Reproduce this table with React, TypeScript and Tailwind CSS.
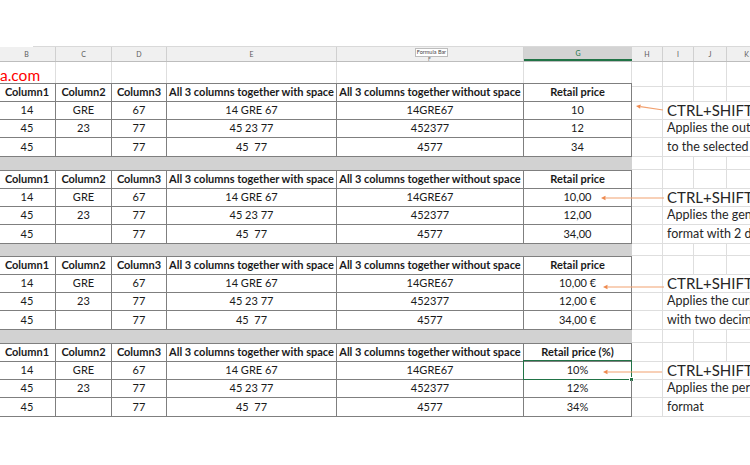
import React from "react";

const GRID =
  "grid grid-cols-[58px_56px_55px_170px_187px_108px_31px_31px_33px_40px] ml-[-2px]";

const LIGHT = "border-[#dedede]";
const DARK = "border-[#7f7f7f]";

type Block = {
  gHeader: string;
  g: string[];
  notes: string[];
};

const base: string[][] = [
  ["14", "GRE", "67", "14 GRE 67", "14GRE67"],
  ["45", "23", "77", "45 23 77", "452377"],
  ["45", "", "77", "45  77", "4577"],
];

const headers = [
  "Column1",
  "Column2",
  "Column3",
  "All 3 columns together with space",
  "All 3 columns together without space",
];

const blocks: Block[] = [
  {
    gHeader: "Retail price",
    g: ["10", "12", "34"],
    notes: ["CTRL+SHIFT+&", "Applies the outline border", "to the selected cells"],
  },
  {
    gHeader: "Retail price",
    g: ["10,00", "12,00", "34,00"],
    notes: ["CTRL+SHIFT+!", "Applies the general number", "format with 2 decimals"],
  },
  {
    gHeader: "Retail price",
    g: ["10,00 €", "12,00 €", "34,00 €"],
    notes: ["CTRL+SHIFT+$", "Applies the currency format", "with two decimals"],
  },
  {
    gHeader: "Retail price (%)",
    g: ["10%", "12%", "34%"],
    notes: ["CTRL+SHIFT+%", "Applies the percentage", "format"],
  },
];

const rowHeights = ["h-[18px]", "h-[19px]", "h-[18px]", "h-[19px]"];
const grayHeights = ["h-[13px]", "h-[12px]", "h-[13px]"];

function RightCells({ note, big }: { note?: string; big?: boolean }) {
  return (
    <>
      <div className={`border-r border-b ${LIGHT}`} />
      {note !== undefined ? (
        <div
          className={`col-span-3 border-b ${LIGHT} flex items-center pl-[4px] whitespace-nowrap overflow-hidden text-[#262626] ${
            big ? "text-[15px] pt-[1px]" : "text-[12.5px]"
          }`}
        >
          {note}
        </div>
      ) : (
        <>
          <div className={`border-r border-b ${LIGHT}`} />
          <div className={`border-r border-b ${LIGHT}`} />
          <div className={`border-b ${LIGHT}`} />
        </>
      )}
    </>
  );
}

function TableBlock({ block, idx }: { block: Block; idx: number }) {
  const rows: { cells: string[]; header: boolean }[] = [
    { cells: [...headers, block.gHeader], header: true },
    ...base.map((r, i) => ({ cells: [...r, block.g[i]], header: false })),
  ];
  return (
    <>
      {rows.map((row, ri) => (
        <div key={ri} className={`${GRID} ${rowHeights[ri]}`}>
          {row.cells.map((c, ci) => {
            const selected = idx === 3 && ri === 1 && ci === 5;
            return (
              <div
                key={ci}
                className={`relative flex items-center justify-center whitespace-pre text-[11px] text-[#1a1a1a] border-r border-b ${DARK} ${
                  ci === 0 ? "border-l" : ""
                } ${ri === 0 ? "border-t font-bold" : ""}`}
              >
                {c}
                {selected && (
                  <>
                    <div className="absolute inset-[-1px] border-[1.5px] border-[#217346]" />
                    <div className="absolute right-[-3px] bottom-[-3px] w-[5px] h-[5px] bg-[#217346] border border-white" />
                  </>
                )}
              </div>
            );
          })}
          <RightCells
            note={ri === 0 ? undefined : block.notes[ri - 1]}
            big={ri === 1}
          />
        </div>
      ))}
      {idx < 3 && (
        <div className={`${GRID} ${grayHeights[idx]}`}>
          <div className="col-span-6 bg-[#d2d2d2]" />
          <RightCells />
        </div>
      )}
    </>
  );
}

const letters = ["B", "C", "D", "E", "F", "G", "H", "I", "J", "K"];

export default function App() {
  return (
    <div
      className="relative w-[750px] h-[465px] overflow-hidden bg-white"
      style={{ fontFamily: "Lato, 'Open Sans', sans-serif" }}
    >
      <div className="h-[46px]" />
      <div className="h-px ml-[33px] bg-[#d9d9d9]" />
      {/* column header */}
      <div className={`${GRID} h-[15px] bg-[#f0f0f0] border-b border-[#bdbdbd]`}>
        {letters.map((l) => (
          <div
            key={l}
            className={`flex items-center justify-center text-[7px] ${
              l === "G"
                ? "bg-[#d3d3d3] border-b-2 border-[#217346] text-[#217346]"
                : "text-[#5a5a5a] border-r border-[#d0d0d0]"
            }`}
          >
            {l === "F" ? "" : l}
          </div>
        ))}
      </div>
      {/* row with url */}
      <div className={`${GRID} h-[21px]`}>
        <div className={`border-r ${LIGHT} flex items-center pl-[2px] text-[15.5px] text-[#ff0000] pt-[2px]`}>
          a.com
        </div>
        <div className={`border-r ${LIGHT}`} />
        <div className={`border-r ${LIGHT}`} />
        <div className={`border-r ${LIGHT}`} />
        <div className={`border-r ${LIGHT}`} />
        <div className={`border-r ${LIGHT}`} />
        <RightCells />
      </div>
      {blocks.map((b, i) => (
        <TableBlock key={i} block={b} idx={i} />
      ))}

      {/* Formula bar tooltip */}
      <div className="absolute left-[415px] top-[48px] w-[33px] h-[9px] bg-white border border-[#bdbdbd] text-[5.5px] leading-[7px] text-[#444] text-center whitespace-nowrap">
        Formula Bar
      </div>
      <div className="absolute left-[428px] top-[57px] text-[5px] leading-[5px] text-[#666]">F</div>

      {/* arrows */}
      <svg
        className="absolute left-0 top-0 pointer-events-none"
        width="750"
        height="465"
        viewBox="0 0 750 465"
      >
        {[
          [663, 110, 636, 106],
          [664, 198, 601, 198],
          [664, 287, 603, 287],
          [662, 372, 603, 372],
        ].map(([x1, y1, x2, y2], i) => {
          const ang = Math.atan2(y2 - y1, x2 - x1);
          const hx = x2;
          const hy = y2;
          const s = 4.5;
          const w = 2.2;
          const bx = hx - Math.cos(ang) * s;
          const by = hy - Math.sin(ang) * s;
          const px = -Math.sin(ang) * w;
          const py = Math.cos(ang) * w;
          return (
            <g key={i}>
              <line x1={x1} y1={y1} x2={bx} y2={by} stroke="#f2a170" strokeWidth="1.1" />
              <polygon
                points={`${hx},${hy} ${bx + px},${by + py} ${bx - px},${by - py}`}
                fill="#ee8a4f"
              />
            </g>
          );
        })}
      </svg>
    </div>
  );
}
